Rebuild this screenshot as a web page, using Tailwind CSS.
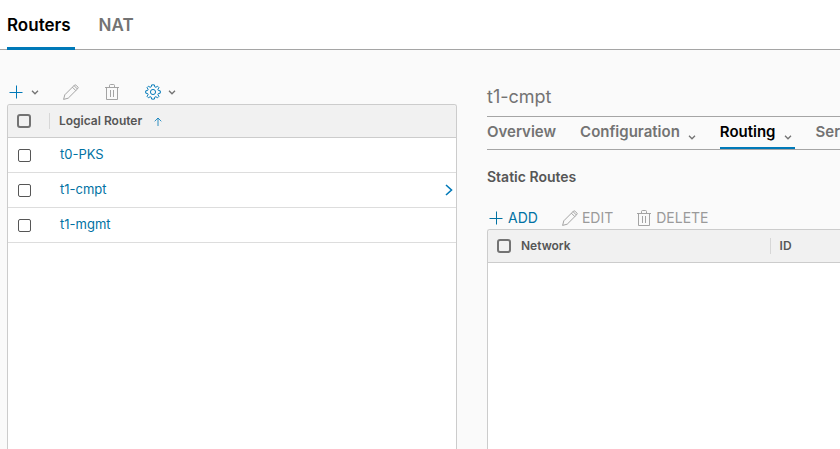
<!DOCTYPE html>
<html lang="en">
<head>
<meta charset="utf-8">
<meta name="viewport" content="width=device-width, initial-scale=1">
<title>Routers</title>
<script src="https://cdn.jsdelivr.net/npm/@tailwindcss/browser@4"></script>
</head>
<body class="flex min-h-screen flex-col overflow-x-hidden bg-[#fafafa] font-['Inter','Open_Sans',sans-serif] text-[13px] text-[#565656]">
<svg class="hidden" aria-hidden="true">
  <symbol id="plus" viewBox="0 0 14 14"><path d="M7.500 .5v13M.5 7.500h13" fill="none" stroke="currentColor"/></symbol>
  <symbol id="caret" viewBox="0 0 8 5"><path d="M1 .8l3 3 3-3" fill="none" stroke="currentColor" stroke-width="1.3"/></symbol>
  <symbol id="pencil" viewBox="0 0 16 16"><path d="M.6 15.400l1.200-4.600L11.500 1.100q.7-.7 1.400 0l2 2q.7.7 0 1.400L5.200 14.200zM9.400 3.200l3.400 3.400M11 1.600l3.400 3.400" fill="none" stroke="currentColor" stroke-width=".9" stroke-linejoin="round"/></symbol>
  <symbol id="trash" viewBox="0 0 14 16"><path d="M0 3.500h14M1.500 3.500v12h11v-12M4.500 3V1.500q0-1 1-1h3q1 0 1 1V3M5.500 6v7M8.500 6v7" fill="none" stroke="currentColor" stroke-width=".9"/></symbol>
  <symbol id="gear" viewBox="0 0 18 18"><path d="M7.500 1h3l.5 2.200 1.200.5 1.900-1.200 1.600 1.600-1.200 1.900.5 1.200 2.200.5v2.600l-2.200.5-.5 1.200 1.200 1.900-1.600 1.600-1.900-1.200-1.200.5-.5 2.200h-3L7 14.800l-1.200-.5-1.900 1.200-1.600-1.600 1.200-1.900-.5-1.200-2.200-.5V7.700L3 7.200l.5-1.200-1.200-1.900 1.600-1.600 1.900 1.200L7 3.200z" fill="none" stroke="currentColor" stroke-width="1.100" stroke-linejoin="round"/><circle cx="9" cy="9" r="2.900" fill="none" stroke="currentColor" stroke-width="1.100"/></symbol>
  <symbol id="up" viewBox="0 0 8 9"><path d="M4 9V1M.7 4.300L4 1l3.300 3.300" fill="none" stroke="currentColor" stroke-width=".8"/></symbol>
  <symbol id="right" viewBox="0 0 8 12"><path d="M1 1l5.500 5L1 11" fill="none" stroke="currentColor" stroke-width="1.600"/></symbol>
</svg>

<header class="h-[50px] border-b border-[#a5a5a5] bg-white px-[7px]">
  <nav aria-label="Sections" class="flex h-[50px] gap-5 text-[17px] font-semibold">
    <a href="#routers" aria-current="page" class="flex items-center border-b-[3px] border-[#0079b8] pt-1 pr-1 text-black">Routers</a>
    <a href="#nat" class="flex items-center border-b-[3px] border-transparent pt-1 pl-1 text-[#737373]">NAT</a>
  </nav>
</header>

<main class="grid flex-1 grid-cols-[minmax(0,450fr)_minmax(0,353fr)] gap-[30px] pl-[7px]">
  <section aria-label="Logical routers" class="flex flex-col pt-[31px]">
    <div class="mb-px flex h-[22px] items-center pl-[2px] text-[#9a9a9a]">
      <button aria-label="Add router" class="mr-6 flex items-center gap-2 text-[#0079b8]"><svg class="size-[14px]"><use href="#plus"/></svg><svg class="h-[5px] w-2 text-[#737373]"><use href="#caret"/></svg></button>
      <button aria-label="Edit router" disabled class="mr-[26px]"><svg class="size-4"><use href="#pencil"/></svg></button>
      <button aria-label="Delete router" disabled class="mr-[26px]"><svg class="h-4 w-[14px]"><use href="#trash"/></svg></button>
      <button aria-label="Settings" class="flex items-center gap-[7px] text-[#0079b8]"><svg class="size-4"><use href="#gear"/></svg><svg class="h-[5px] w-2 text-[#737373]"><use href="#caret"/></svg></button>
    </div>
    <div class="flex-1 overflow-hidden rounded-t-[3px] border border-b-0 border-[#ccc] bg-white">
      <table class="w-full table-fixed border-separate border-spacing-0 text-left">
        <colgroup><col class="w-[41px]"><col><col class="w-6"></colgroup>
        <thead class="bg-[#f1f1f1] text-xs">
          <tr class="h-[33px]">
            <th class="border-b border-[#ccc] pl-[9px]"><input type="checkbox" aria-label="Select all routers" class="block size-[14px] appearance-none rounded-[3px] border-2 border-[#737373]"></th>
            <th class="border-b border-[#ccc] font-semibold"><div class="flex items-center gap-3"><span class="border-l border-[#d7d7d7] pl-[9px] leading-4">Logical Router</span><svg class="h-[9px] w-2 text-[#0079b8]"><use href="#up"/></svg></div></th>
            <th class="border-b border-[#ccc]"></th>
          </tr>
        </thead>
        <tbody class="text-[#0072a3]">
          <tr class="h-[35px]">
            <td class="border-b border-[#ddd] pl-[10px]"><input type="checkbox" aria-label="Select t0-PKS" class="block size-[13px] appearance-none rounded-[2px] border border-[#565656]"></td>
            <td class="border-b border-[#ddd] pl-[11px]"><a href="#t0-pks">t0-PKS</a></td>
            <td class="border-b border-[#ddd]"></td>
          </tr>
          <tr class="h-[35px]">
            <td class="border-b border-[#ddd] pl-[10px]"><input type="checkbox" aria-label="Select t1-cmpt" class="block size-[13px] appearance-none rounded-[2px] border border-[#565656]"></td>
            <td class="border-b border-[#ddd] pl-[11px]"><a href="#t1-cmpt">t1-cmpt</a></td>
            <td class="border-b border-[#ddd] pl-[13px]"><svg class="h-3 w-2 text-[#0079b8]"><use href="#right"/></svg></td>
          </tr>
          <tr class="h-[35px]">
            <td class="border-b border-[#ddd] pl-[10px]"><input type="checkbox" aria-label="Select t1-mgmt" class="block size-[13px] appearance-none rounded-[2px] border border-[#565656]"></td>
            <td class="border-b border-[#ddd] pl-[11px]"><a href="#t1-mgmt">t1-mgmt</a></td>
            <td class="border-b border-[#ddd]"></td>
          </tr>
        </tbody>
      </table>
    </div>
  </section>

  <section aria-label="Router details" class="flex flex-col pt-8">
    <h1 class="h-[34px] text-lg leading-[30px] font-normal text-[#737373]">t1-cmpt</h1>
    <nav aria-label="Router views" class="flex h-[34px] gap-[21px] overflow-hidden border-y border-[#a5a5a5] text-[15px] font-semibold text-[#737373]">
      <a href="#overview" class="flex shrink-0 items-center border-b-2 border-transparent pr-[3px]">Overview</a>
      <a href="#configuration" class="flex shrink-0 items-center gap-2 border-b-2 border-transparent pr-[3px]">Configuration<svg class="mt-[10px] h-[5px] w-2"><use href="#caret"/></svg></a>
      <a href="#routing" aria-current="page" class="flex shrink-0 items-center gap-2 border-b-2 border-[#0079b8] pr-[3px] text-black">Routing<svg class="mt-[10px] h-[5px] w-2 text-[#737373]"><use href="#caret"/></svg></a>
      <a href="#services" class="flex shrink-0 items-center border-b-2 border-transparent">Services</a>
    </nav>
    <h2 class="mt-[17px] text-sm leading-5 font-semibold">Static Routes</h2>
    <div class="mt-5 flex h-[22px] items-center gap-6 pl-[2px] text-sm text-[#9a9a9a]">
      <button class="flex items-center gap-[5px] text-[#0072a3]"><svg class="size-[14px]"><use href="#plus"/></svg>ADD</button>
      <button disabled class="flex items-center gap-1"><svg class="size-4"><use href="#pencil"/></svg>EDIT</button>
      <button disabled class="flex items-center gap-[5px]"><svg class="h-4 w-[14px]"><use href="#trash"/></svg>DELETE</button>
    </div>
    <div class="flex-1 overflow-hidden rounded-tl-[3px] border-t border-l border-[#ccc] bg-white">
      <table class="w-full table-fixed border-separate border-spacing-0 text-left">
        <colgroup><col class="w-[33px]"><col><col class="w-[20%]"></colgroup>
        <thead class="bg-[#f1f1f1] text-xs">
          <tr class="h-[33px]">
            <th class="border-b border-[#ccc] pl-[9px]"><input type="checkbox" aria-label="Select all routes" class="block size-[14px] appearance-none rounded-[3px] border-2 border-[#737373]"></th>
            <th class="border-b border-[#ccc] font-semibold">Network</th>
            <th class="border-b border-[#ccc] font-semibold"><div class="border-l border-[#d7d7d7] pl-[9px] leading-4">ID</div></th>
          </tr>
        </thead>
      </table>
    </div>
  </section>
</main>
</body>
</html>
